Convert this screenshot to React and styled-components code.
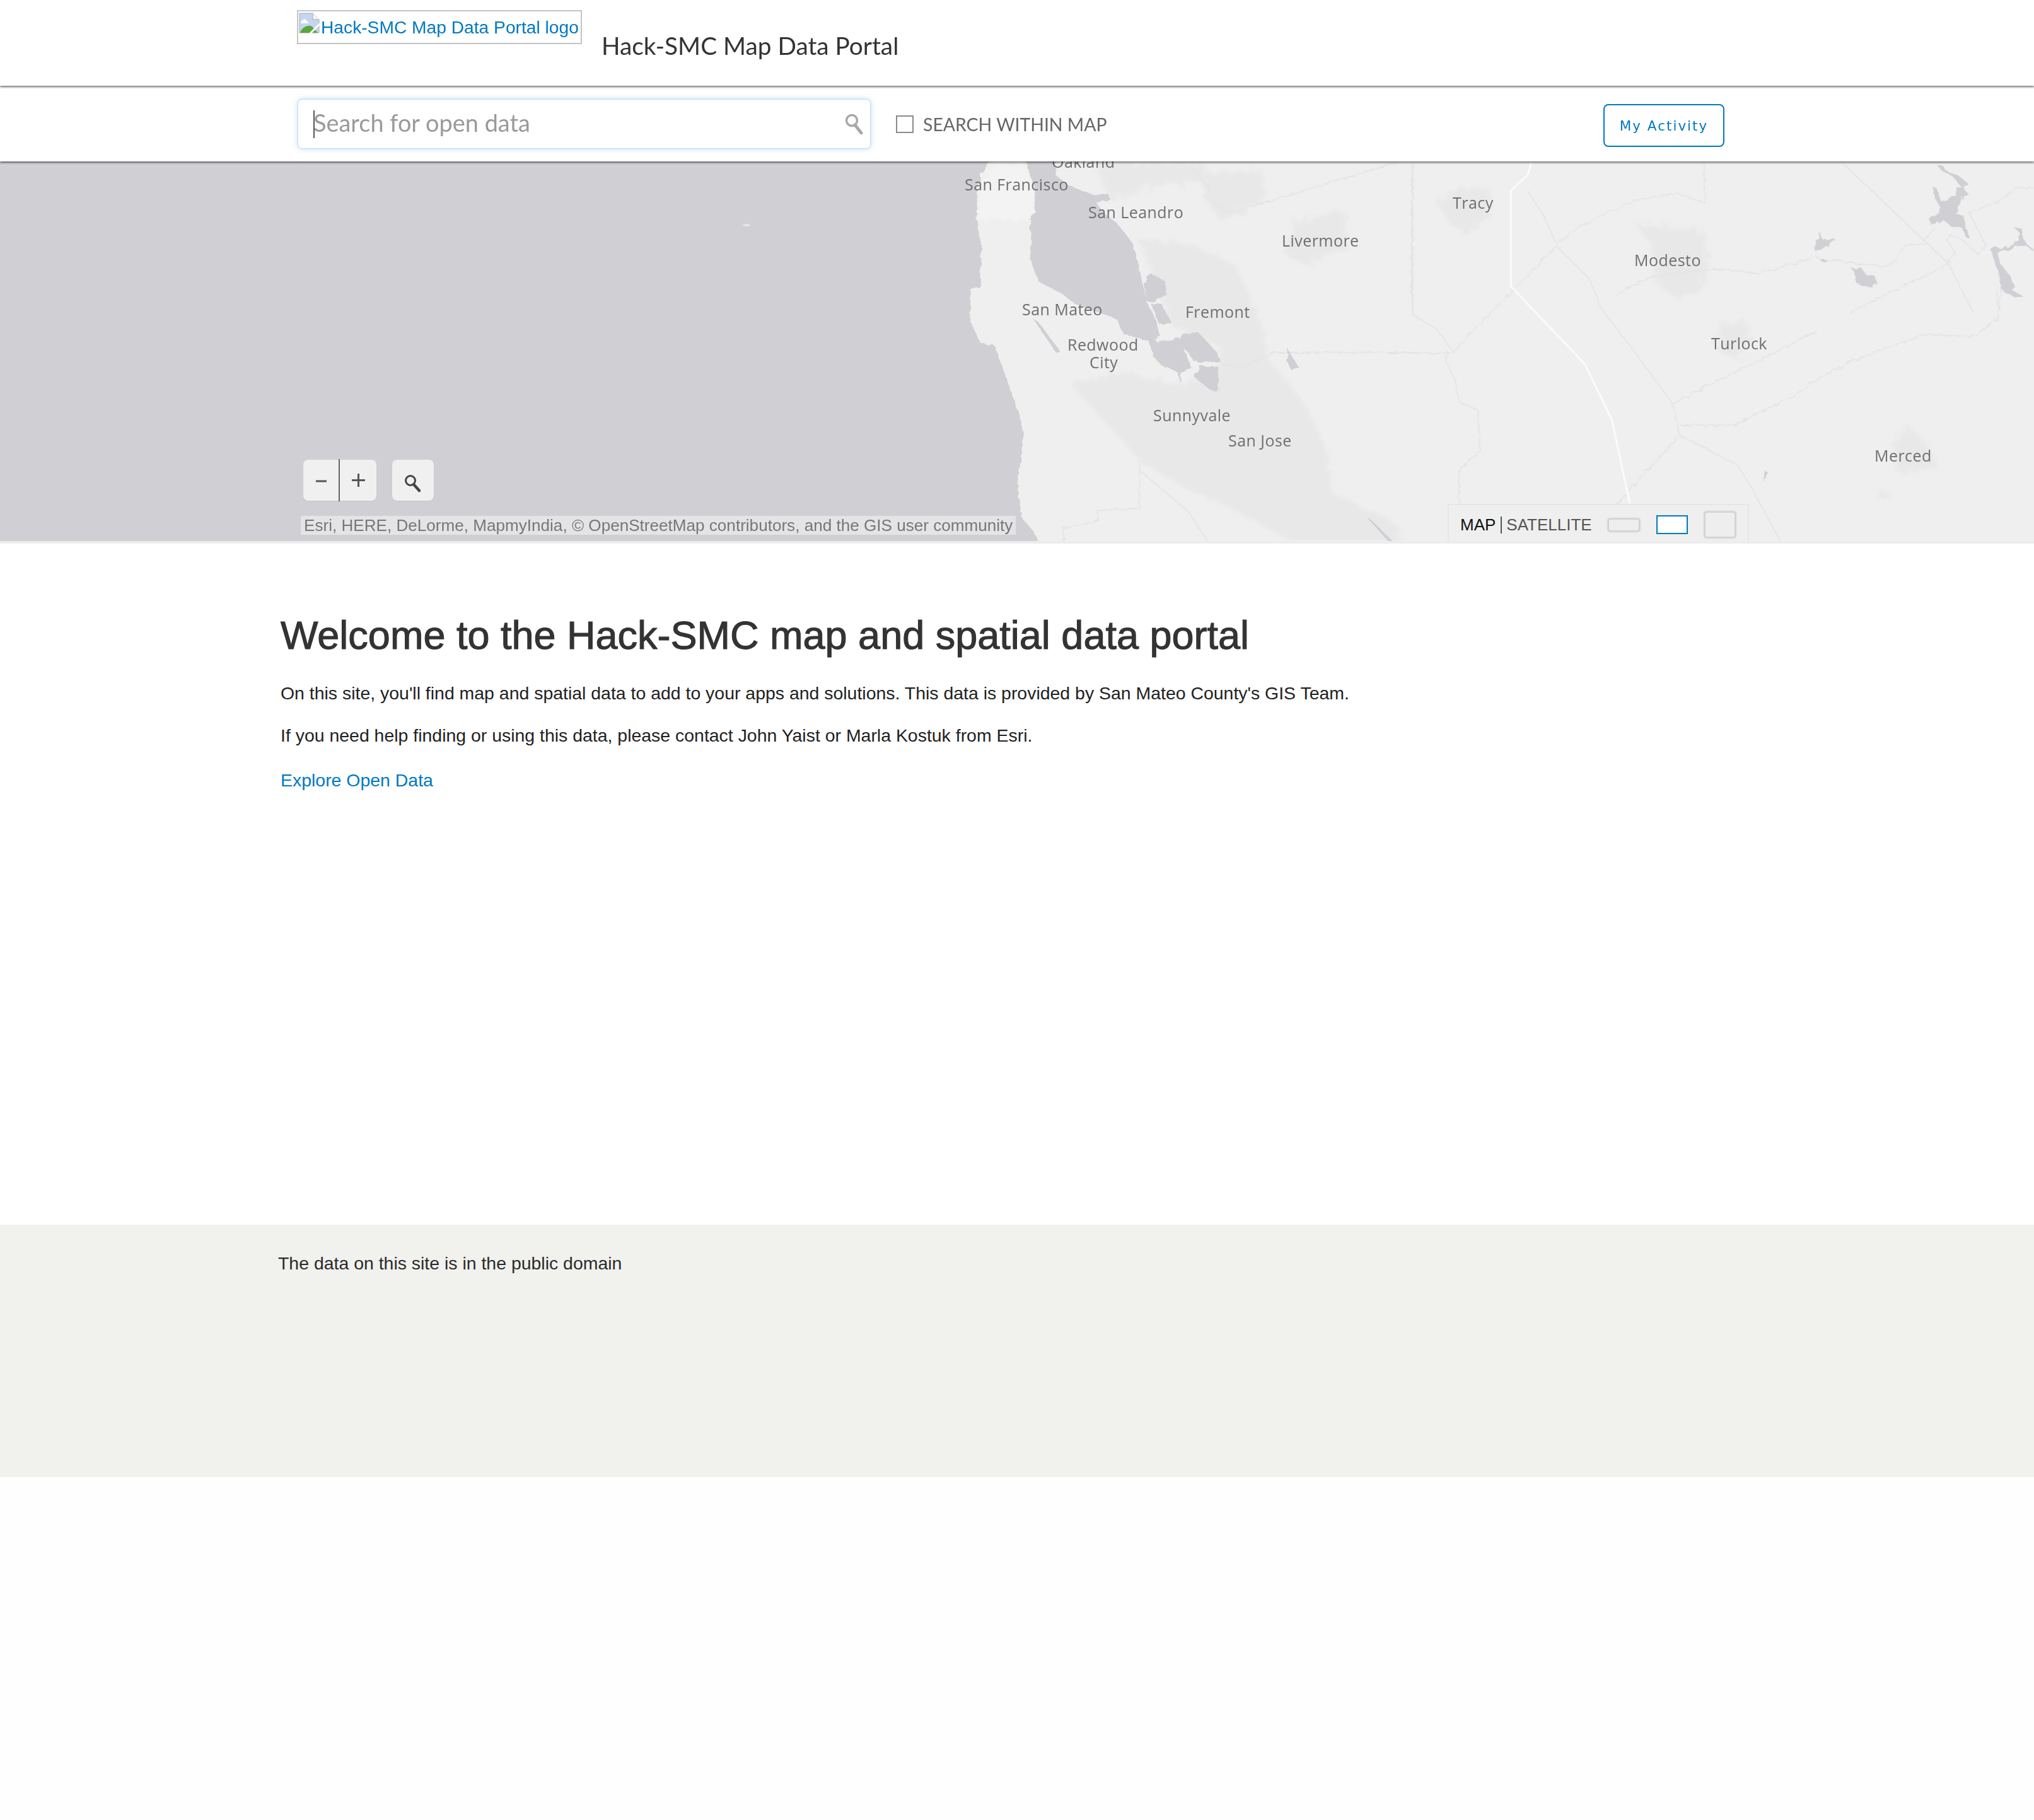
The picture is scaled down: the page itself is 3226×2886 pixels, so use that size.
import styled, { createGlobalStyle } from "styled-components";

const GlobalStyle = createGlobalStyle`
  html, body {
    margin: 0;
    padding: 0;
    background: #fefefe;
    font-family: "Liberation Sans", Arial, sans-serif;
  }
`;

const Page = styled.div`
  min-height: 2886px;
  display: flex;
  flex-direction: column;
`;

const Header = styled.header`
  position: relative;
  z-index: 3;
  height: 136px;
  padding-left: 471px;
  display: flex;
  align-items: flex-start;
  gap: 31px;
  background: #fff;
  box-shadow: 0 2px 3px rgba(0, 0, 0, 0.55);
`;

const LogoBox = styled.a`
  margin-top: 16px;
  width: 452px;
  height: 54px;
  box-sizing: border-box;
  border: 2px solid #c4c4c4;
  display: flex;
  align-items: center;
  padding: 0 0 0 1px;
  gap: 2px;
  color: #0079c1;
  font-size: 28.2px;
  white-space: nowrap;
`;

const BrokenImage = styled.svg`
  width: 33px;
  height: 33px;
  margin-top: -13px;
  flex: none;
`;

const Title = styled.h1`
  margin: 46px 0 0;
  font-family: Lato, "Open Sans", sans-serif;
  font-weight: 400;
  font-size: 38.8px;
  line-height: 52px;
  color: #333;
`;

const Toolbar = styled.div`
  position: relative;
  z-index: 2;
  height: 118px;
  margin-top: 2px;
  padding: 0 491px 0 473px;
  display: flex;
  align-items: center;
  background: #fff;
  box-shadow: 0 2px 3px rgba(0, 0, 0, 0.55);
`;

const SearchBox = styled.div`
  position: relative;
  width: 907px;
  height: 77px;
  margin-top: -2px;
  padding: 0 0 4px 24px;
  box-sizing: border-box;
  display: flex;
  align-items: center;
  border-radius: 6px;
  background: #fff;
  box-shadow: 0 0 9px rgba(90, 165, 240, 0.5), 0 0 2px rgba(90, 130, 180, 0.5);
`;

const Caret = styled.span`
  position: absolute;
  left: 24px;
  top: 17px;
  width: 2px;
  height: 44px;
  background: #555;
`;

const Placeholder = styled.span`
  font-family: Lato, "Open Sans", sans-serif;
  font-size: 37.9px;
  color: #9a9a9a;
`;

const SearchIcon = styled.svg`
  position: absolute;
  right: 10px;
  top: 22px;
  width: 30px;
  height: 33px;
`;

const WithinMap = styled.label`
  margin-left: 41px;
  display: flex;
  align-items: center;
  gap: 15px;
  font-family: Lato, "Open Sans", sans-serif;
  font-size: 28.4px;
  color: #666;
  white-space: nowrap;
`;

const Checkbox = styled.span`
  width: 28px;
  height: 28px;
  box-sizing: border-box;
  border: 2px solid #8a8a8a;
  background: #fff;
`;

const ActivityButton = styled.button`
  margin-left: auto;
  margin-top: 4px;
  width: 192px;
  height: 68px;
  padding: 0;
  box-sizing: border-box;
  border: 2px solid #0079c1;
  border-radius: 8px;
  background: #fff;
  color: #0079c1;
  font-family: "DejaVu Sans", sans-serif;
  font-size: 21.5px;
  letter-spacing: 2px;
`;

const MapArea = styled.section`
  position: relative;
  height: 602px;
  overflow: hidden;
  background: #efefef;
  border-bottom: 4px solid #ededed;
`;

const MapDrawing = styled.svg`
  position: absolute;
  left: 0;
  top: 0;
  display: block;
`;

const PlaceLabel = styled.span`
  position: absolute;
  left: ${(p) => p.$x}px;
  top: ${(p) => p.$y - 256 - 17}px;
  font-family: "Open Sans", sans-serif;
  font-size: 25px;
  line-height: 34px;
  letter-spacing: 0.45px;
  color: #6f6f6f;
  white-space: nowrap;
`;

const MapControls = styled.div`
  position: absolute;
  left: 481px;
  top: 473px;
  display: flex;
  gap: 25px;
`;

const ZoomGroup = styled.div`
  position: relative;
  width: 116px;
  height: 65px;
  display: grid;
  grid-template-columns: 57px 59px;
  border-radius: 8px;
  background: #f0f0f0;
  box-shadow: 0 1px 1px #c4c4c8;
`;

const ZoomButton = styled.div`
  display: flex;
  align-items: center;
  justify-content: center;
  color: #555;
  & + & {
    margin-left: -1px;
    border-left: 2px solid #666;
    margin-top: -1px;
    margin-bottom: -1px;
  }
`;

const ToolButton = styled.div`
  width: 66px;
  height: 65px;
  display: flex;
  align-items: flex-end;
  justify-content: center;
  padding-bottom: 12px;
  box-sizing: border-box;
  border-radius: 8px;
  background: #f0f0f0;
  box-shadow: 0 1px 1px #c4c4c8;
`;

const Attribution = styled.div`
  position: absolute;
  left: 477px;
  top: 562px;
  height: 30px;
  padding: 0 5px;
  background: rgba(240, 240, 240, 0.62);
  color: #777;
  font-size: 26.1px;
  line-height: 30px;
  white-space: nowrap;
`;

const BasemapPanel = styled.div`
  position: absolute;
  left: 2296px;
  top: 543px;
  width: 478px;
  height: 59px;
  box-sizing: border-box;
  padding: 5px 0 0 18px;
  display: flex;
  align-items: center;
  border: 2px solid #e6e6e6;
  border-bottom: 0;
  background: #efefef;
  font-size: 26px;
  color: #555;
  white-space: nowrap;
`;

const ActiveMode = styled.span`
  color: #111;
`;

const Separator = styled.span`
  display: inline-block;
  width: 2px;
  height: 27px;
  margin: 0 7px 0 8px;
  background: #555;
`;

const Thumb = styled.span`
  flex: none;
  box-sizing: border-box;
  width: ${(p) => p.$w}px;
  height: ${(p) => p.$h}px;
  margin-left: ${(p) => p.$gap}px;
  background: ${(p) => (p.$active ? "#fff" : "#eee")};
  border: 2px solid ${(p) => (p.$active ? "#0079c1" : "#d2d2d2")};
  box-shadow: ${(p) => (p.$active ? "none" : "0 0 3px #bbb")};
  border-radius: ${(p) => (p.$active ? "0" : "4px")};
`;

const Main = styled.main`
  height: 1080px;
  padding: 106px 0 0 445px;
  box-sizing: border-box;
  background: #fff;
`;

const Heading = styled.h2`
  margin: 0 0 36px;
  font-size: 63px;
  line-height: 78px;
  font-weight: 400;
  color: #333;
  -webkit-text-stroke: 1.1px #333;
`;

const Paragraph = styled.p`
  margin: 0 0 33px;
  font-size: 28.45px;
  line-height: 34px;
  color: #222;
`;

const LinkRow = styled(Paragraph)`
  margin-top: 37px;
`;

const TextLink = styled.a`
  color: #0079c1;
  text-decoration: none;
`;

const Footer = styled.footer`
  height: 400px;
  padding: 44px 0 0 441px;
  box-sizing: border-box;
  background: #f1f1ee;
  font-size: 28.45px;
  line-height: 34px;
  color: #2b2b2b;
`;

const places = [
  ["Oakland", 1668, 256],
  ["San Francisco", 1530, 292],
  ["San Leandro", 1726, 336],
  ["Livermore", 2033, 381],
  ["Tracy", 2304, 321],
  ["Modesto", 2592, 412],
  ["Turlock", 2714, 544],
  ["San Mateo", 1621, 490],
  ["Fremont", 1880, 494],
  ["Redwood", 1693, 546],
  ["City", 1728, 574],
  ["Sunnyvale", 1829, 658],
  ["San Jose", 1948, 698],
  ["Merced", 2973, 722],
];

const water = "#cfcfd4";
const urban = "#e8e8e9";
const line = "#e5e5e5";

// transforms for the three areas, coordinates below are traced from crops
const BAY = "translate(1450 250) scale(0.5102 0.4)";
const VALLEY = "translate(2200 250) scale(0.6544 0.4)";
const LAKES = "translate(2880 256) scale(0.3333)";

function MapArt() {
  return (
    <MapDrawing width="3226" height="602" viewBox="0 256 3226 602">
      <defs>
        <filter id="soft" filterUnits="userSpaceOnUse" x="0" y="256" width="3226" height="602">
          <feTurbulence type="fractalNoise" baseFrequency="0.09" numOctaves="3" seed="4" />
          <feDisplacementMap in="SourceGraphic" scale="26" />
          <feGaussianBlur stdDeviation="2.5" />
        </filter>
        <filter id="rough" filterUnits="userSpaceOnUse" x="0" y="256" width="3226" height="602">
          <feTurbulence type="fractalNoise" baseFrequency="0.12" numOctaves="2" seed="7" />
          <feDisplacementMap in="SourceGraphic" scale="7" />
          <feGaussianBlur stdDeviation="0.5" />
        </filter>
      </defs>

      <g filter="url(#soft)" fill={urban}>
        <g transform={BAY}>
          <path d="M700 330L860 340 1000 430 1080 650 1100 800 1200 950 1280 1150 1300 1330 1500 1450 1510 1540 1200 1540 1000 1400 830 1300 700 1200 560 1000 490 900 640 850 830 900 950 830 950 750 800 660 720 400Z" />
          <path d="M900 60L1080 50 1090 170 950 250 900 150Z" />
          <path d="M1180 250L1340 210 1340 350 1220 430 1150 380Z" />
          <path d="M560 20L900 20 900 90 720 120 610 170Z" />
          <path fill="#f3f3f3" d="M230 25L345 25 375 130 375 210 360 250 205 250 195 120Z" />
        </g>
        <g transform={VALLEY}>
          <path d="M120 180L180 120 250 130 250 230 190 300 150 260Z" />
          <path d="M605 265L770 290 778 370 760 530 700 560 650 490 640 350Z" />
          <path d="M805 650L875 650 880 720 860 800 800 770Z" />
          <path d="M1260 1060L1310 1140 1340 1230 1230 1250 1230 1130Z" />
          <path d="M1190 1320L1220 1320 1210 1360 1195 1360Z" />
          <path d="M0 1430L30 1470 0 1530Z" />
        </g>
      </g>

      <g filter="url(#rough)" fill="none" stroke={line} strokeWidth="2">
        <g transform={BAY}>
          <path vectorEffect="non-scaling-stroke" d="M980 220L1500 20M860 40L920 120 900 150 980 220M1110 772L1568 772M1110 772L1030 830 950 820M700 1200L700 1390 570 1400 570 1440 465 1470 465 1535M700 1240L850 1400 920 1535M1550 30L1550 620 1568 640" />
        </g>
        <g transform={VALLEY}>
          <path vectorEffect="non-scaling-stroke" d="M60 20L60 620 120 680 160 770 410 350M0 775L150 775 140 800 165 880 175 970 220 1000 225 1160 175 1240 175 1385M770 20L770 180 700 140 600 170 480 260 410 340 380 230 340 130M410 350L490 480 520 600 600 770 690 970 710 1100 850 1220 880 1300 960 1540M690 975L1040 690M710 1100L550 1385M710 1060L840 1060 980 950 1040 880M1040 880L1120 810 1300 700 1420 710 1480 640 1490 500M550 550L640 470 800 440 900 460 1030 400" />
        </g>
        <g transform={LAKES}>
          <path vectorEffect="non-scaling-stroke" d="M135 15L630 485 750 720M160 720L630 490M0 450L30 470 130 475 220 490 330 500 380 470 420 400 510 390 565 310M630 485L660 430 625 375 640 350 700 375 770 440 810 400 730 245 860 195 960 125 1038 125M860 620L870 720" />
        </g>
      </g>

      <g fill="none" stroke="#fbfbfb" strokeWidth="3" transform={VALLEY}>
        <path vectorEffect="non-scaling-stroke" d="M350 20L340 70 300 130 300 510 480 820 545 1040 590 1385" />
      </g>

      <g filter="url(#rough)" fill={water}>
        <g transform={BAY}>
          <path d="M-2850 0L240 0 210 60 195 120 195 250 210 350 205 510 175 520 175 650 205 735 250 745 285 870 330 1030 340 1100 320 1300 335 1430 370 1480 403 1560-2850 1560Z" />
          <path d="M345 0L440 0 440 70 480 110 560 150 600 140 612 170 565 178 590 220 630 260 680 340 695 420 715 520 722 570 750 640 762 700 750 728 800 722 835 745 860 830 830 850 826 892 820 850 770 825 745 790 730 728 650 700 630 640 500 580 460 540 385 490 360 400 365 330 358 260 375 210 375 130Z" />
          <path d="M735 458L780 490 785 540 750 570 722 568 715 500Z" />
          <path d="M735 578L770 580 800 655 762 660Z" />
          <path d="M803 722L840 700 880 688 940 770 952 810 870 810 850 770Z" />
          <path d="M890 825L945 830 945 920 925 925 880 880 870 868Z" />
          <path d="M1160 755L1175 790 1195 830 1175 845 1160 810Z" />
          <path d="M370 640L385 650 455 770 440 770Z" />
          <path d="M1410 1430L1420 1435 1495 1530 1480 1530Z" />
        </g>
        <g transform={VALLEY}>
          <path d="M915 1240L925 1250 912 1285Z" />
        </g>
        <g transform={LAKES}>
          <path d="M575 15L600 15 620 45 680 70 725 105 700 125 725 155 700 165 705 185 690 165 680 220 665 250 700 255 710 300 730 350 730 370 715 360 695 315 650 315 610 280 575 290 550 305 540 270 585 250 590 215 565 175 558 125 575 130 600 195 640 170 665 165 668 125 690 120 650 70 600 45Z" />
          <path d="M945 315L980 318 985 365 1005 395 1038 420 1038 430 1000 400 960 400 920 425 880 425 860 435 880 490 920 540 945 590 935 615 985 640 950 645 900 625 880 600 870 530 832 420 855 405 880 415 940 395 965 370 970 340Z" />
          <path d="M20 330L28 370 90 368 60 405 20 420-5 425-5 375 12 370Z" />
          <path d="M170 510L215 505 240 540 280 545 290 575 270 600 220 590 190 575 185 530Z" />
          <ellipse cx="37" cy="470" rx="14" ry="6" />
        </g>
      </g>
      <ellipse cx="1184" cy="357" rx="6" ry="2" fill="#e6e6e8" />
    </MapDrawing>
  );
}

function App() {
  return (
    <Page>
      <GlobalStyle />
      <Header>
        <LogoBox>
          <BrokenImage viewBox="0 0 33 33">
            <path d="M1 1H22L32 11V32H1Z" fill="#c5d5f2" stroke="#a9a9a9" />
            <path d="M22 1V11H32" fill="#f6f6f6" stroke="#a9a9a9" />
            <path d="M3 16C3 13 6 13 7 11C9 9 12 11 13 14C15 14 16 16 15 17H4Z" fill="#fff" />
            <path d="M1.5 32C5 24 13 18 21 22L30 32Z" fill="#5aa83c" />
            <path d="M33 18L18 33" stroke="#fff" strokeWidth="3" />
          </BrokenImage>
          Hack-SMC Map Data Portal logo
        </LogoBox>
        <Title>Hack-SMC Map Data Portal</Title>
      </Header>
      <Toolbar>
        <SearchBox>
          <Caret />
          <Placeholder>Search for open data</Placeholder>
          <SearchIcon viewBox="0 0 30 33">
            <circle cx="11" cy="11" r="8.5" fill="none" stroke="#a8a8a8" strokeWidth="3.5" />
            <path d="M16 18L26 31" stroke="#a8a8a8" strokeWidth="5" strokeLinecap="round" />
          </SearchIcon>
        </SearchBox>
        <WithinMap>
          <Checkbox />
          SEARCH WITHIN MAP
        </WithinMap>
        <ActivityButton>My Activity</ActivityButton>
      </Toolbar>
      <MapArea>
        <MapArt />
        {places.map(([name, x, y]) => (
          <PlaceLabel key={name} $x={x} $y={y}>
            {name}
          </PlaceLabel>
        ))}
        <MapControls>
          <ZoomGroup>
            <ZoomButton>
              <svg width="17" height="20" viewBox="0 0 17 20">
                <path d="M0 11H17" stroke="#555" strokeWidth="3" />
              </svg>
            </ZoomButton>
            <ZoomButton>
              <svg width="21" height="21" viewBox="0 0 21 21">
                <path d="M0 10.5H21M10.5 0V21" stroke="#555" strokeWidth="3" />
              </svg>
            </ZoomButton>
          </ZoomGroup>
          <ToolButton>
            <svg width="28" height="30" viewBox="0 0 28 30">
              <circle cx="10" cy="10" r="7.5" fill="none" stroke="#444" strokeWidth="3" />
              <path d="M15 16L24 26" stroke="#444" strokeWidth="4.5" strokeLinecap="round" />
            </svg>
          </ToolButton>
        </MapControls>
        <Attribution>Esri, HERE, DeLorme, MapmyIndia, © OpenStreetMap contributors, and the GIS user community</Attribution>
        <BasemapPanel>
          <ActiveMode>MAP</ActiveMode>
          <Separator />
          SATELLITE
          <Thumb $w={51} $h={21} $gap={25} />
          <Thumb $w={50} $h={30} $gap={26} $active />
          <Thumb $w={50} $h={42} $gap={26} />
        </BasemapPanel>
      </MapArea>
      <Main>
        <Heading>Welcome to the Hack-SMC map and spatial data portal</Heading>
        <Paragraph>On this site, you'll find map and spatial data to add to your apps and solutions. This data is provided by San Mateo County's GIS Team.</Paragraph>
        <Paragraph>If you need help finding or using this data, please contact John Yaist or Marla Kostuk from Esri.</Paragraph>
        <LinkRow>
          <TextLink>Explore Open Data</TextLink>
        </LinkRow>
      </Main>
      <Footer>The data on this site is in the public domain</Footer>
    </Page>
  );
}

export default App;
